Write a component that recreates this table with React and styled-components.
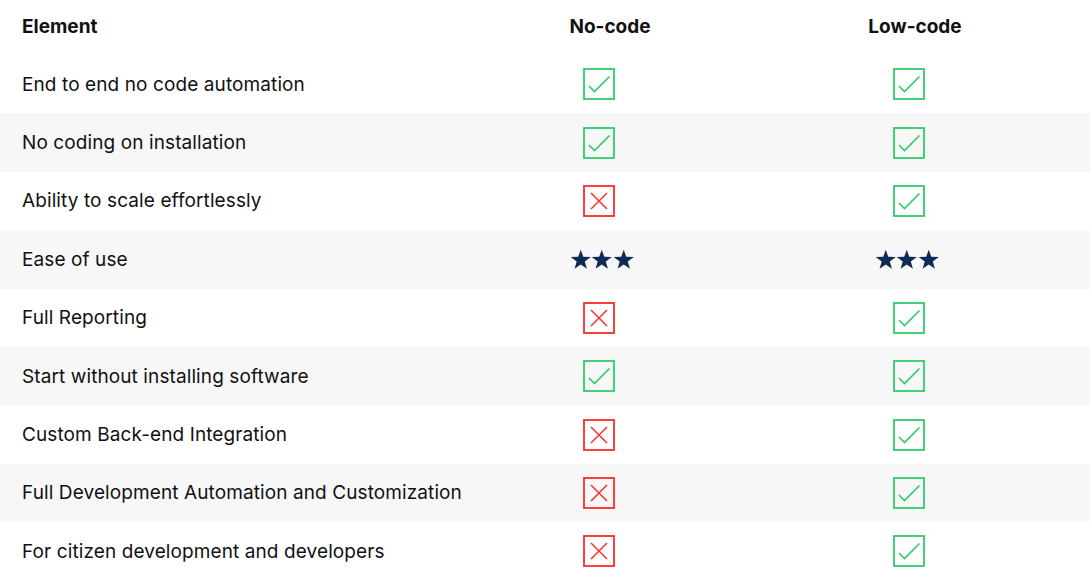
import React from "react";
import styled, { createGlobalStyle } from "styled-components";

const Global = createGlobalStyle`
  html, body { margin: 0; padding: 0; background: #ffffff; }
  body { font-family: Inter, "Liberation Sans", Arial, sans-serif; color: #111111; }
`;

const Table = styled.div`
  display: flex;
  flex-direction: column;
  width: 1090px;
`;

const Row = styled.div`
  display: grid;
  grid-template-columns: 560px 100px 205px 100px 1fr;
  align-items: center;
  height: ${(p) => (p.$header ? "55px" : "58.4px")};
  box-sizing: border-box;
  padding-bottom: ${(p) => (p.$header ? "3px" : "0")};
  background: ${(p) => (p.$striped ? "#f7f7f8" : "#ffffff")};
`;

const Label = styled.div`
  grid-column: 1;
  padding-left: 22px;
  font-size: 19px;
  font-weight: ${(p) => (p.$header ? 700 : 400)};
  letter-spacing: ${(p) => (p.$header ? "0" : "0.1px")};
`;

const HeadCenter = styled.div`
  grid-column: ${(p) => p.$col};
  text-align: center;
  font-size: 19px;
  font-weight: 700;
`;

const IconCell = styled.div`
  grid-column: ${(p) => p.$col};
  display: flex;
  justify-content: center;
  padding-right: ${(p) => p.$shift}px;
`;

const Box = styled.svg`
  width: 32px;
  height: 32px;
  display: block;
`;

const Check = () => (
  <Box viewBox="0 0 32 32">
    <rect x="1" y="1" width="30" height="30" fill="none" stroke="#2fcb6b" strokeWidth="1.8" />
    <path d="M6 18 L11.5 23.5 L26.5 8.5" fill="none" stroke="#2fcb6b" strokeWidth="1.6" />
  </Box>
);

const Cross = () => (
  <Box viewBox="0 0 32 32">
    <rect x="1" y="1" width="30" height="30" fill="none" stroke="#ff2b2b" strokeWidth="1.8" />
    <path d="M8 8 L24 24 M24 8 L8 24" fill="none" stroke="#ff2b2b" strokeWidth="1.5" />
  </Box>
);

const StarRow = styled.div`
  display: flex;
  margin-left: ${(p) => p.$nudge}px;
`;

const StarSvg = styled.svg`
  width: 21.5px;
  height: 21px;
  display: block;
`;

const Star = () => (
  <StarSvg viewBox="0 0 24 23">
    <path
      d="M12 0.5 L14.8 8.4 L23.2 8.6 L16.5 13.7 L18.9 21.8 L12 17 L5.1 21.8 L7.5 13.7 L0.8 8.6 L9.2 8.4 Z"
      fill="#0b2c55"
    />
  </StarSvg>
);

const Stars = ({ nudge }) => (
  <StarRow $nudge={nudge}>
    <Star />
    <Star />
    <Star />
  </StarRow>
);

const rows = [
  ["End to end no code automation", "y", "y"],
  ["No coding on installation", "y", "y"],
  ["Ability to scale effortlessly", "n", "y"],
  ["Ease of use", "s", "s"],
  ["Full Reporting", "n", "y"],
  ["Start without installing software", "y", "y"],
  ["Custom Back-end Integration", "n", "y"],
  ["Full Development Automation and Customization", "n", "y"],
  ["For citizen development and developers", "n", "y"],
];

const renderMark = (m, nudge) =>
  m === "y" ? <Check /> : m === "n" ? <Cross /> : <Stars nudge={nudge} />;

export default function App() {
  return (
    <>
      <Global />
      <Table>
        <Row $header>
          <Label $header>Element</Label>
          <HeadCenter $col={2}>No-code</HeadCenter>
          <HeadCenter $col={4}>Low-code</HeadCenter>
        </Row>
        {rows.map(([label, a, b], i) => (
          <Row key={label} $striped={i % 2 === 1}>
            <Label>{label}</Label>
            <IconCell $col={2} $shift={22}>{renderMark(a, 6)}</IconCell>
            <IconCell $col={4} $shift={12}>{renderMark(b, -4)}</IconCell>
          </Row>
        ))}
      </Table>
    </>
  );
}
